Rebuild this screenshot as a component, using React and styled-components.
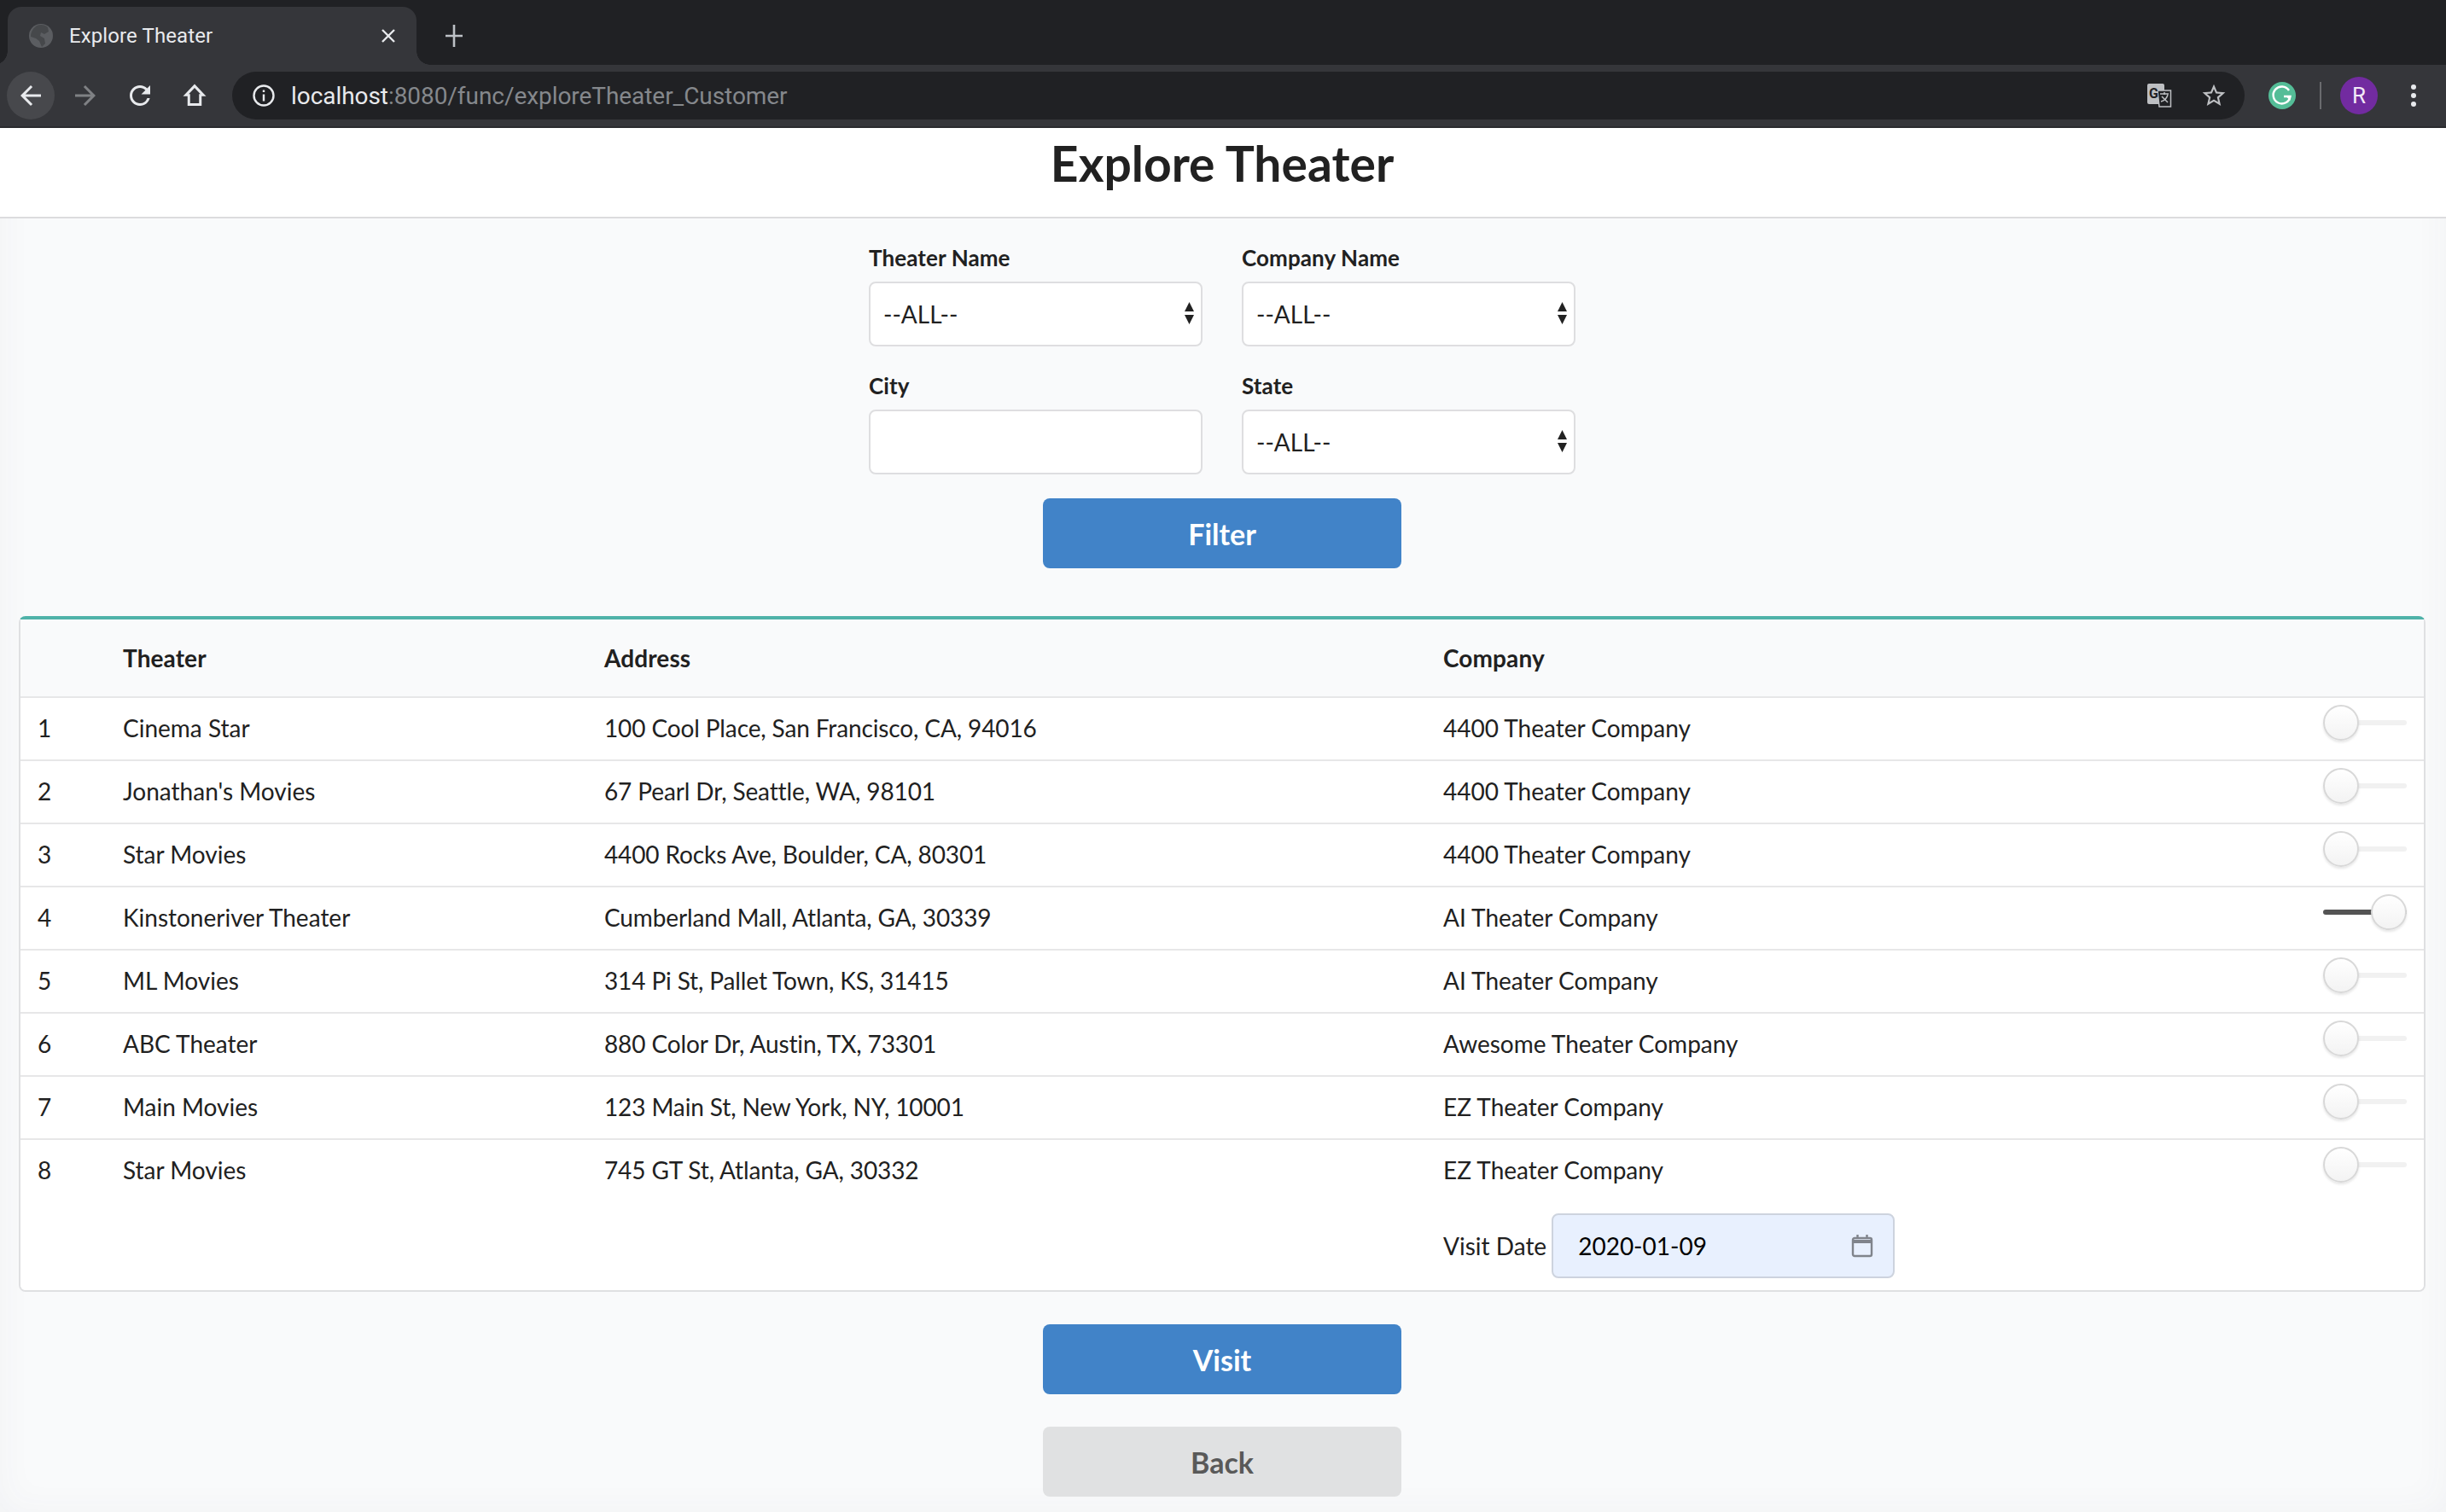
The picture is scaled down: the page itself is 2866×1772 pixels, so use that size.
import React from 'react'
import styled, { createGlobalStyle } from 'styled-components'

const GlobalStyle = createGlobalStyle`
  html, body { margin: 0; padding: 0; background: #f9fafb; }
  body { font-family: Lato, "Open Sans", sans-serif; color: #212121; }
  * { box-sizing: border-box; }
`

const Page = styled.div`
  width: 2866px;
  height: 1772px;
  overflow: hidden;
  display: flex;
  flex-direction: column;
`

/* browser chrome */
const TabStrip = styled.div`
  height: 76px;
  background: #202124;
  padding: 8px 0 0 9px;
  display: flex;
  align-items: flex-start;
  font-family: Roboto, sans-serif;
`
const Tab = styled.div`
  position: relative;
  width: 479px;
  height: 68px;
  background: #35363a;
  border-radius: 16px 16px 0 0;
  padding: 0 23px 0 25px;
  display: flex;
  align-items: center;
  gap: 19px;
  color: #e8eaed;
  font-size: 24px;
  letter-spacing: 0.1px;
  &::before, &::after {
    content: '';
    position: absolute;
    bottom: 0;
    width: 16px;
    height: 16px;
  }
  &::before {
    left: -16px;
    background: radial-gradient(circle at 0 0, transparent 15.5px, #35363a 16px);
  }
  &::after {
    right: -16px;
    background: radial-gradient(circle at 100% 0, transparent 15.5px, #35363a 16px);
  }
`
const TabTitle = styled.span`
  flex: 1;
  line-height: 68px;
`
const NewTab = styled.div`
  margin: 21px 0 0 34px;
  width: 20px;
  height: 26px;
  display: flex;
  color: #bdc1c6;
`
const Toolbar = styled.div`
  height: 74px;
  background: #35363a;
  border-bottom: 2px solid #2a2b2e;
  padding-left: 8px;
  display: flex;
  align-items: center;
`
const NavGroup = styled.div`
  display: flex;
  gap: 8px;
`
const NavButton = styled.div`
  width: 56px;
  height: 56px;
  border-radius: 50%;
  display: flex;
  align-items: center;
  justify-content: center;
  background: ${({ $active }) => ($active ? '#47484c' : 'transparent')};
  color: ${({ $dim }) => ($dim ? '#7f8184' : '#e8eaed')};
`
const Omnibox = styled.div`
  flex: 1;
  margin-left: 16px;
  height: 56px;
  border-radius: 28px;
  background: #202124;
  padding: 0 20px 0 23px;
  display: flex;
  align-items: center;
  font-family: Roboto, sans-serif;
  font-size: 28px;
  color: #e8eaed;
`
const Url = styled.div`
  flex: 1;
  margin-left: 18px;
  letter-spacing: -0.06px;
`
const UrlRest = styled.span`
  color: #85888c;
`
const OmniIcons = styled.div`
  display: flex;
  align-items: center;
  gap: 32px;
  color: #bdbfc2;
`
const ToolbarRight = styled.div`
  width: 236px;
  display: flex;
  align-items: center;
  color: #e8eaed;
`
const Grammarly = styled.div`
  margin-left: 28px;
  width: 32px;
  height: 32px;
  display: flex;
`
const Separator = styled.div`
  margin-left: 28px;
  width: 2px;
  height: 32px;
  background: #6a6b6e;
`
const Avatar = styled.div`
  margin-left: 22px;
  width: 44px;
  height: 44px;
  border-radius: 50%;
  background: #722ba0;
  color: #f3e9f7;
  font-family: Roboto, sans-serif;
  font-size: 26px;
  display: flex;
  align-items: center;
  justify-content: center;
`
const Dots = styled.div`
  margin-left: 39px;
  width: 6px;
  display: flex;
  flex-direction: column;
  gap: 4px;
  & > i {
    width: 6px;
    height: 6px;
    border-radius: 50%;
    background: #e8eaed;
  }
`

/* page */
const Main = styled.main`
  flex: 1;
  box-shadow: inset 0 0 44px rgba(60, 70, 90, .045);
`
const Header = styled.header`
  height: 106px;
  background: #fff;
  border-bottom: 2px solid #dcdcde;
  padding: 5px 2px 0 0;
  text-align: center;
`
const Title = styled.h1`
  margin: 0;
  font-size: 57px;
  line-height: 72px;
  font-weight: 700;
  color: #212121;
`
const Content = styled.div`
  width: 2864px;
`
const FilterForm = styled.form`
  width: 828px;
  margin: 32px auto 0;
  display: grid;
  grid-template-columns: 391px 391px;
  column-gap: 46px;
  row-gap: 32px;
`
const Field = styled.div`
  display: flex;
  flex-direction: column;
`
const Label = styled.label`
  font-size: 26px;
  line-height: 29px;
  font-weight: 700;
  letter-spacing: 0.1px;
  margin-bottom: 13px;
`
const SelectWrap = styled.div`
  position: relative;
  height: 76px;
`
const Select = styled.select`
  appearance: none;
  width: 100%;
  height: 76px;
  background: #fff;
  border: 2px solid #dedee0;
  border-radius: 8px;
  padding: 0 15px;
  font-family: Lato, sans-serif;
  font-size: 28px;
  color: #212121;
`
const SelectArrows = styled.svg`
  position: absolute;
  right: 9px;
  top: 24px;
  width: 13px;
  height: 27px;
  pointer-events: none;
`
const TextInput = styled.input`
  width: 100%;
  height: 76px;
  background: #fff;
  border: 2px solid #dedee0;
  border-radius: 8px;
`
const Button = styled.button`
  display: block;
  width: 420px;
  height: 82px;
  margin: ${({ $top }) => $top}px auto 0;
  border: 0;
  border-radius: 8px;
  background: ${({ $grey }) => ($grey ? '#e0e1e2' : '#4183c8')};
  color: ${({ $grey }) => ($grey ? '#595959' : '#fff')};
  font-family: Lato, sans-serif;
  font-weight: 700;
  font-size: 34px;
`
const TableWrap = styled.div`
  margin: 56px 22px 0;
`
const Table = styled.table`
  width: 2820px;
  table-layout: fixed;
  border-collapse: separate;
  border-spacing: 0;
  border: 2px solid #dfe0e2;
  border-top: 4px solid #4fb2a9;
  border-radius: 8px;
  font-size: 28px;
`
const HeadCell = styled.th`
  height: 90px;
  padding: 0 0 0 22px;
  text-align: left;
  font-weight: 700;
  letter-spacing: 0.1px;
  background: #f9fafb;
`
const Cell = styled.td`
  height: 74px;
  padding: 0 0 2px ${({ $first }) => ($first ? 20 : 22)}px;
  background: #fff;
  border-top: 2px solid #e7e7e8;
`
const AddressCell = styled(Cell)`
  letter-spacing: -0.12px;
`
const SliderCell = styled.td`
  height: 74px;
  padding: 8px 20px 0 0;
  vertical-align: top;
  background: #fff;
  border-top: 2px solid #e7e7e8;
`
const Slider = styled.div`
  position: relative;
  width: 98px;
  height: 42px;
  margin-left: auto;
`
const Track = styled.div`
  position: absolute;
  left: 0;
  right: 0;
  top: 18px;
  height: 6px;
  border-radius: 3px;
  background: ${({ $on }) => ($on ? '#545454' : '#f1f1f1')};
`
const Knob = styled.div`
  position: absolute;
  top: 0;
  left: ${({ $on }) => ($on ? 56 : 0)}px;
  width: 42px;
  height: 42px;
  border-radius: 50%;
  background: linear-gradient(#fff, #f3f3f3);
  border: 2px solid #d8d8d8;
  box-shadow: 0 2px 3px rgba(0,0,0,.1);
`
const FootCell = styled.td`
  height: 104px;
  padding: 0 0 0 ${({ $pad }) => ($pad ? 22 : 0)}px;
  background: #fff;
  border-radius: ${({ $r }) => $r || 0};
`
const VisitDate = styled.div`
  display: flex;
  align-items: center;
  gap: 6px;
`
const DateBox = styled.div`
  position: relative;
  width: 402px;
  height: 76px;
`
const DateInput = styled.input`
  width: 100%;
  height: 100%;
  padding: 0 0 0 29px;
  background: #e8f0fe;
  border: 2px solid #cdd3de;
  border-radius: 8px;
  font-family: Lato, sans-serif;
  font-size: 28px;
  color: #000;
`
const CalendarIcon = styled.svg`
  position: absolute;
  right: 24px;
  top: 24px;
  width: 28px;
  height: 28px;
`

const theaters = [
  ['Cinema Star', '100 Cool Place, San Francisco, CA, 94016', '4400 Theater Company'],
  ["Jonathan's Movies", '67 Pearl Dr, Seattle, WA, 98101', '4400 Theater Company'],
  ['Star Movies', '4400 Rocks Ave, Boulder, CA, 80301', '4400 Theater Company'],
  ['Kinstoneriver Theater', 'Cumberland Mall, Atlanta, GA, 30339', 'AI Theater Company', true],
  ['ML Movies', '314 Pi St, Pallet Town, KS, 31415', 'AI Theater Company'],
  ['ABC Theater', '880 Color Dr, Austin, TX, 73301', 'Awesome Theater Company'],
  ['Main Movies', '123 Main St, New York, NY, 10001', 'EZ Theater Company'],
  ['Star Movies', '745 GT St, Atlanta, GA, 30332', 'EZ Theater Company'],
]

const Icon = ({ d, size = 36 }) => (
  <svg width={size} height={size} viewBox="0 0 24 24" fill="currentColor"><path d={d} /></svg>
)

const DropDown = () => (
  <SelectWrap>
    <Select defaultValue="all"><option value="all">--ALL--</option></Select>
    <SelectArrows viewBox="0 0 12 27" fill="#222">
      <path d="M6 0l5.5 11H.5zM.5 15h11L6 26z" />
    </SelectArrows>
  </SelectWrap>
)

const App = () => (
  <Page>
    <GlobalStyle />
    <TabStrip>
      <Tab>
        <svg width="28" height="28" viewBox="0 0 28 28">
          <circle cx="14" cy="14" r="14" fill="#5b5d61" />
          <path d="M9 2c5-2 10-1 13 2l1 5-5 3-4-2-1 4 5 3 1 6-4 4-3-7-4-3-6-2c0-6 3-10 7-13z" fill="#46484b" />
        </svg>
        <TabTitle>Explore Theater</TabTitle>
        <svg width="20" height="20" viewBox="0 0 20 20" stroke="#e8eaed" strokeWidth="2.4">
          <path d="M3 3l14 14M17 3L3 17" />
        </svg>
      </Tab>
      <NewTab>
        <svg width="20" height="26" viewBox="0 0 20 26" stroke="currentColor" strokeWidth="2.6">
          <path d="M10 0v26M0 13h20" />
        </svg>
      </NewTab>
    </TabStrip>
    <Toolbar>
      <NavGroup>
        <NavButton $active>
          <Icon d="M20 11H7.83l5.59-5.59L12 4l-8 8 8 8 1.41-1.41L7.83 13H20v-2z" />
        </NavButton>
        <NavButton $dim>
          <Icon d="M12 4l-1.41 1.41L16.17 11H4v2h12.17l-5.58 5.59L12 20l8-8z" />
        </NavButton>
        <NavButton>
          <Icon d="M17.65 6.35A7.958 7.958 0 0012 4c-4.42 0-7.99 3.58-7.99 8s3.57 8 7.99 8c3.73 0 6.84-2.55 7.73-6h-2.08A5.99 5.99 0 0112 18c-3.31 0-6-2.69-6-6s2.69-6 6-6c1.66 0 3.14.69 4.22 1.78L13 11h7V4l-2.35 2.35z" />
        </NavButton>
        <NavButton>
          <Icon d="M12 3L3 12.5h3.5V20h11v-7.5H21L12 3zm0 3l4.6 4.9h-1.1V18h-7v-7.1H7.4L12 6z" />
        </NavButton>
      </NavGroup>
      <Omnibox>
        <svg width="28" height="28" viewBox="0 0 28 28" fill="none" stroke="#e8eaed" strokeWidth="2.4">
          <circle cx="14" cy="14" r="11.5" />
          <path d="M14 12.5v8M14 7.5v2.6" />
        </svg>
        <Url>localhost<UrlRest>:8080/func/exploreTheater_Customer</UrlRest></Url>
        <OmniIcons>
          <svg width="32" height="32" viewBox="0 0 32 32">
            <rect x="2" y="2" width="20" height="24" rx="2" fill="#bdbfc2" />
            <path d="M14 10h15.500v19H16z" fill="#202124" stroke="#bdbfc2" strokeWidth="1.500" />
            <text x="4" y="19" fontFamily="Roboto, sans-serif" fontSize="16" fontWeight="700" fill="#202124">G</text>
            <path d="M17 14h10M22 12v3M26 15c-1 4-4 7-8 8M19 17l7 7" stroke="#bdbfc2" strokeWidth="1.500" fill="none" />
          </svg>
          <Icon size={32} d="M22 9.24l-7.19-.62L12 2 9.19 8.63 2 9.24l5.46 4.73L5.82 21 12 17.27 18.18 21l-1.63-7.03L22 9.24zM12 15.4l-3.76 2.27 1-4.28-3.32-2.88 4.38-.38L12 6.1l1.71 4.04 4.38.38-3.32 2.88 1 4.28L12 15.4z" />
        </OmniIcons>
      </Omnibox>
      <ToolbarRight>
        <Grammarly>
          <svg width="32" height="32" viewBox="0 0 32 32">
            <circle cx="16" cy="16" r="16" fill="#54bd97" />
            <path d="M24 10a10 10 0 1 0 1.500 7H18" fill="none" stroke="#fff" strokeWidth="2.400" />
            <path d="M25.500 16.500v5.500l-5-5z" fill="#fff" />
          </svg>
        </Grammarly>
        <Separator />
        <Avatar>R</Avatar>
        <Dots><i /><i /><i /></Dots>
      </ToolbarRight>
    </Toolbar>

    <Main>
      <Header><Title>Explore Theater</Title></Header>

      <Content>
        <FilterForm>
          <Field><Label>Theater Name</Label><DropDown /></Field>
          <Field><Label>Company Name</Label><DropDown /></Field>
          <Field><Label>City</Label><TextInput /></Field>
          <Field><Label>State</Label><DropDown /></Field>
        </FilterForm>
        <Button type="button" $top={28}>Filter</Button>

        <TableWrap>
          <Table>
            <colgroup>
              <col width="98" />
              <col width="564" />
              <col width="983" />
              <col width="1000" />
              <col />
            </colgroup>
            <thead>
              <tr>
                <HeadCell />
                <HeadCell>Theater</HeadCell>
                <HeadCell>Address</HeadCell>
                <HeadCell>Company</HeadCell>
                <HeadCell />
              </tr>
            </thead>
            <tbody>
              {theaters.map(([name, address, company, on], i) => (
                <tr key={i}>
                  <Cell $first>{i + 1}</Cell>
                  <Cell>{name}</Cell>
                  <AddressCell>{address}</AddressCell>
                  <Cell>{company}</Cell>
                  <SliderCell>
                    <Slider>
                      <Track $on={on} />
                      <Knob $on={on} />
                    </Slider>
                  </SliderCell>
                </tr>
              ))}
            </tbody>
            <tfoot>
              <tr>
                <FootCell colSpan={3} $r="0 0 0 6px" />
                <FootCell $pad>
                  <VisitDate>
                    Visit Date
                    <DateBox>
                      <DateInput readOnly value="2020-01-09" />
                      <CalendarIcon viewBox="0 0 28 28" fill="none" stroke="#80848c" strokeWidth="2.400">
                        <rect x="3" y="5" width="22" height="21" rx="2" />
                        <path d="M3 9h22" strokeWidth="4" />
                        <path d="M8.500 1v5M19.500 1v5" />
                      </CalendarIcon>
                    </DateBox>
                  </VisitDate>
                </FootCell>
                <FootCell $r="0 0 6px 0" />
              </tr>
            </tfoot>
          </Table>
        </TableWrap>

        <Button type="button" $top={38}>Visit</Button>
        <Button type="button" $top={38} $grey>Back</Button>
      </Content>
    </Main>
  </Page>
)

export default App
